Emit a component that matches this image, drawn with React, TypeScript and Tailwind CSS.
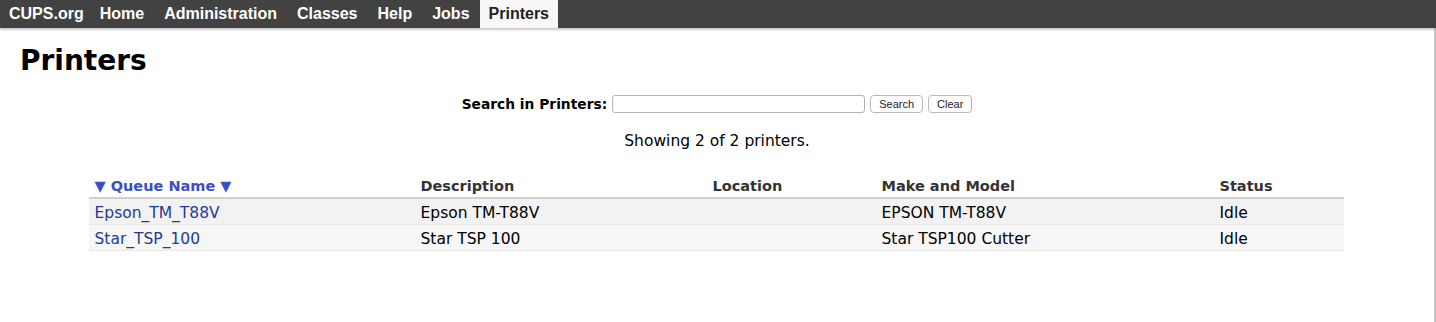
import React from "react";

const navItems = ["Home", "Administration", "Classes", "Help", "Jobs"];

const rows = [
  { name: "Epson_TM_T88V", desc: "Epson TM-T88V", loc: "", model: "EPSON TM-T88V", status: "Idle" },
  { name: "Star_TSP_100", desc: "Star TSP 100", loc: "", model: "Star TSP100 Cutter", status: "Idle" },
];

export default function App() {
  return (
    <div className="h-[322px] w-[1436px] bg-white overflow-hidden flex flex-col" style={{ fontFamily: '"DejaVu Sans", sans-serif' }}>
      <nav
        className="h-[28px] bg-[#424242] flex items-stretch shadow-[0_1px_3px_rgba(0,0,0,0.35)] relative z-10 text-[16px] font-bold text-white"
        style={{ fontFamily: '"Liberation Sans", Arial, sans-serif' }}
      >
        <a className="pl-[9px] pr-[6px] flex items-center">CUPS.org</a>
        {navItems.map((n) => (
          <a key={n} className="px-[10px] flex items-center">
            {n}
          </a>
        ))}
        <a className="px-[9px] flex items-center bg-[#f8f8f8] text-[#222]">Printers</a>
      </nav>
      <div className="flex flex-1">
        <main className="flex-1 flex flex-col">
          <h1 className="text-[28px] font-bold text-black leading-none pl-[20px] pt-[19px]">Printers</h1>
          <div className="flex items-center justify-center mt-[19px] gap-[5px]">
            <span className="text-[13.8px] font-bold text-black">Search in Printers:</span>
            <div className="w-[253px] h-[18px] border border-[#b5b5b5] rounded-[3px] bg-white" />
            <button
              className="h-[18px] px-[8px] border border-[#b8b8b8] rounded-[4px] bg-white text-[11px] text-[#222] leading-none"
              style={{ fontFamily: '"Liberation Sans", Arial, sans-serif' }}
            >
              Search
            </button>
            <button
              className="h-[18px] px-[8px] border border-[#b8b8b8] rounded-[4px] bg-white text-[11px] text-[#222] leading-none"
              style={{ fontFamily: '"Liberation Sans", Arial, sans-serif' }}
            >
              Clear
            </button>
          </div>
          <p className="text-center text-[15.5px] text-black mt-[16px] leading-[20px]">Showing 2 of 2 printers.</p>
          <div className="mx-auto w-[1255px] mt-[25px] -translate-x-[1px]">
            <div className="grid grid-cols-[326px_292px_169px_338px_130px] border-b-2 border-[#d0d0d0] text-[14.5px] font-bold text-[#333] leading-[20px] pb-[1px]">
              <div className="pl-[6px] text-[#3b4fc4]">▼ Queue Name ▼</div>
              <div className="pl-[6px]">Description</div>
              <div className="pl-[6px]">Location</div>
              <div className="pl-[6px]">Make and Model</div>
              <div className="pl-[6px]">Status</div>
            </div>
            {rows.map((r, i) => (
              <div
                key={r.name}
                className={`grid grid-cols-[326px_292px_169px_338px_130px] h-[26px] pt-[3px] items-center text-[15.5px] text-black border-b border-[#e8e8e8] ${
                  i === 0 ? "bg-[#f2f2f2]" : "bg-[#f6f6f6]"
                }`}
              >
                <div className="pl-[6px] text-[#1e3a9a]">{r.name}</div>
                <div className="pl-[6px]">{r.desc}</div>
                <div className="pl-[6px]">{r.loc}</div>
                <div className="pl-[6px]">{r.model}</div>
                <div className="pl-[6px]">{r.status}</div>
              </div>
            ))}
          </div>
        </main>
        <div className="w-[2px] bg-[#c4c4c4]" />
      </div>
    </div>
  );
}
